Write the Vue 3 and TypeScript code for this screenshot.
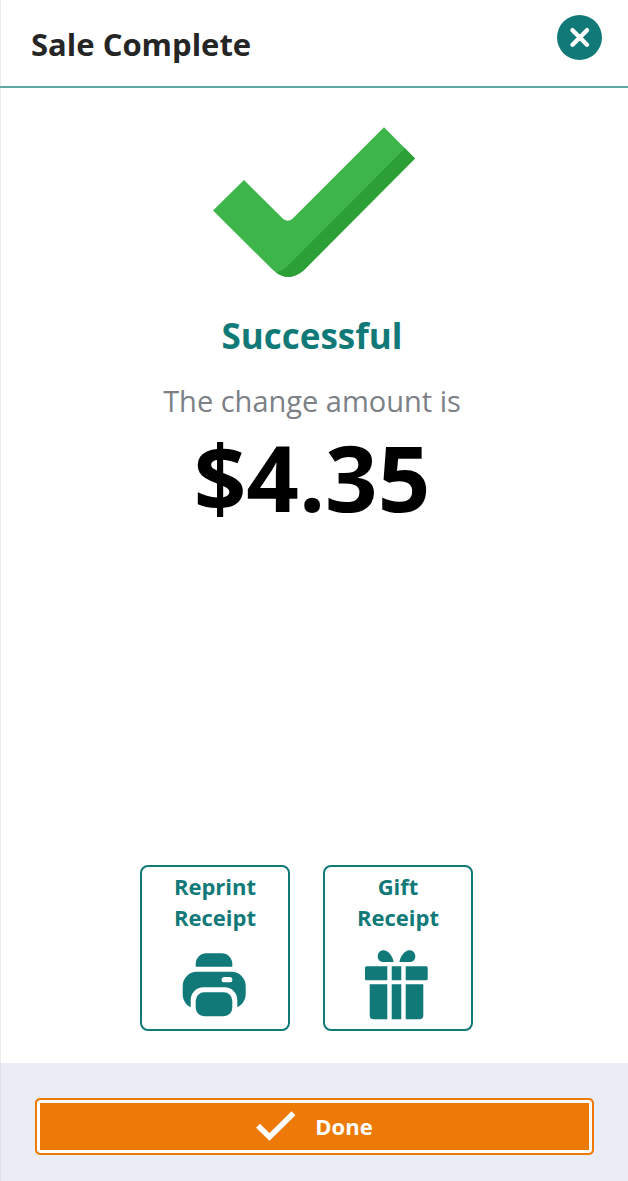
<script setup lang="ts">
import { ref } from 'vue'

const change = ref<number>(4.35)

const formatMoney = (value: number): string => `$${value.toFixed(2)}`
</script>

<template>
  <main class="dialog">
    <header class="header">
      <h1 class="title">Sale Complete</h1>
      <button class="close" type="button" aria-label="Close">
        <svg width="45" height="45" viewBox="0 0 45 45" aria-hidden="true">
          <path d="M15.5 15.2 30 29.7M30 15.2 15.5 29.7" fill="none" stroke="#fff" stroke-width="4.4" stroke-linecap="round" />
        </svg>
      </button>
    </header>

    <section class="result">
      <svg class="success-mark" width="202" height="150" viewBox="0 0 202 150" aria-hidden="true">
        <path fill="#3eb54a" d="M0 83.5 31 53 70 91.7Q74.8 96 79.5 91.7L171 .3 202 31.5 91 143Q75 157 60 143Z" />
        <path fill="#2ca037" d="M192 21.3 202 31.5 91 143Q77 155.500 63 145.500Q70 144 76 137.500Z" />
      </svg>
      <h2 class="status">Successful</h2>
      <p class="caption">The change amount is</p>
      <p class="amount">{{ formatMoney(change) }}</p>
    </section>

    <div class="actions">
      <button class="card" type="button">
        <span>Reprint<br />Receipt</span>
        <svg width="66" height="72" viewBox="0 0 66 72" fill="currentColor" aria-hidden="true">
          <path d="M13.700 17.700V15A10.500 10.500 0 0 1 24.200 4.300H39.800A10.500 10.500 0 0 1 50.300 15V17.700Z" />
          <path fill-rule="evenodd" d="M.7 37A14.300 14.300 0 0 1 15 22.700H49.400A14.300 14.300 0 0 1 63.700 37V45C63.700 51 60.500 55.500 55.300 58.300V51A12.700 12.700 0 0 0 42.600 38.300H21.400A12.700 12.700 0 0 0 8.700 51V58.300C3.500 55.500 .7 51 .7 45ZM42.300 28A2.600 2.600 0 0 0 42.300 33.300H47.700A2.600 2.600 0 0 0 47.700 28Z" />
          <rect x="13.700" y="43.300" width="36.600" height="24" rx="8.500" />
        </svg>
      </button>
      <button class="card" type="button">
        <span>Gift<br />Receipt</span>
        <svg width="66" height="72" viewBox="0 0 66 72" fill="currentColor" aria-hidden="true">
          <path d="M18.300 13C14.800 13 12.700 10.500 12.700 7.500C12.700 4 15 1.300 18.500 1.300C23 1.300 27.500 7 28.700 13Z" />
          <path d="M44.700 13C48.200 13 50.300 10.500 50.300 7.500C50.300 4 48 1.300 44.500 1.300C40 1.300 35.500 7 34.300 13Z" />
          <path d="M22.300 17.300V31.300H1.500Q0 31.300 0 29.800V18.800Q0 17.300 1.500 17.300ZM26.700 17.300H36.300V31.300H26.700ZM40.700 17.300H61.200Q62.700 17.300 62.700 18.800V29.800Q62.700 31.300 61.200 31.300H40.700Z" />
          <path d="M4.700 35.300H22.300V70.300H8.700Q4.700 70.300 4.700 66.300ZM26.700 35.300H36.300V70.300H26.700ZM40.700 35.300H58.300V66.300Q58.300 70.300 54.300 70.300H40.700Z" />
        </svg>
      </button>
    </div>

    <footer class="footer">
      <button class="done" type="button">
        <svg width="40" height="30" viewBox="0 0 40 30" aria-hidden="true">
          <path d="M2 14.700 13.500 26 37.500 2.200" fill="none" stroke="#fff" stroke-width="5.500" />
        </svg>
        Done
      </button>
    </footer>
  </main>
</template>

<style>
body {
  margin: 0;
  background: #fff;
}
</style>

<style scoped>
.dialog {
  box-sizing: border-box;
  min-height: 100vh;
  display: flex;
  flex-direction: column;
  background: #fff;
  box-shadow: inset 1px 0 0 #ececec;
  font-family: "Segoe UI", "Open Sans", "Noto Sans", sans-serif;
}

button {
  box-sizing: border-box;
  font: inherit;
  cursor: pointer;
}

svg {
  display: block;
}

.header {
  display: flex;
  align-items: center;
  justify-content: space-between;
  padding: 15px 26px 26px 31px;
  border-bottom: 2px solid #5ea8a6;
}

.title {
  margin: 13px 0 0;
  font-size: 31px;
  line-height: 32px;
  font-weight: 700;
  color: #252525;
}

.close {
  width: 45px;
  height: 45px;
  padding: 0;
  border: 0;
  border-radius: 50%;
  background: #117a78;
}

.result {
  flex: 1;
  display: flex;
  flex-direction: column;
  align-items: center;
  padding-top: 39px;
}

.status {
  margin: 35px 4px 0 0;
  font-size: 35px;
  line-height: 48px;
  font-weight: 700;
  color: #117a78;
}

.caption {
  margin: 21px 4px 0 0;
  font-size: 29px;
  line-height: 40px;
  color: #7c8087;
}

.amount {
  margin: 0 4px 0 0;
  font-size: 92px;
  line-height: 112px;
  font-weight: 700;
  color: #000;
}

.actions {
  display: flex;
  justify-content: center;
  gap: 33px;
  padding: 32px 15px 32px 0;
}

.card {
  width: 150px;
  display: flex;
  flex-direction: column;
  align-items: center;
  gap: 16px;
  padding: 4px 8px 8px;
  border: 2px solid #117a78;
  border-radius: 8px;
  background: #fff;
  color: #117a78;
  font-size: 22px;
  line-height: 31px;
  font-weight: 700;
  text-align: center;
}

.footer {
  padding: 35px 34px 26px 35px;
  background: #eaedf5;
  box-shadow: inset 1px 0 0 #e0e2e8;
}

.done {
  width: 100%;
  height: 57px;
  display: flex;
  align-items: center;
  justify-content: center;
  gap: 19px;
  padding: 0 0 2px;
  border: 2px solid #ed7a07;
  border-radius: 5px;
  box-shadow: inset 0 0 0 3px #fff;
  background: #ed7a07;
  color: #fff;
  font-size: 22px;
  line-height: 30px;
  font-weight: 700;
}
</style>
